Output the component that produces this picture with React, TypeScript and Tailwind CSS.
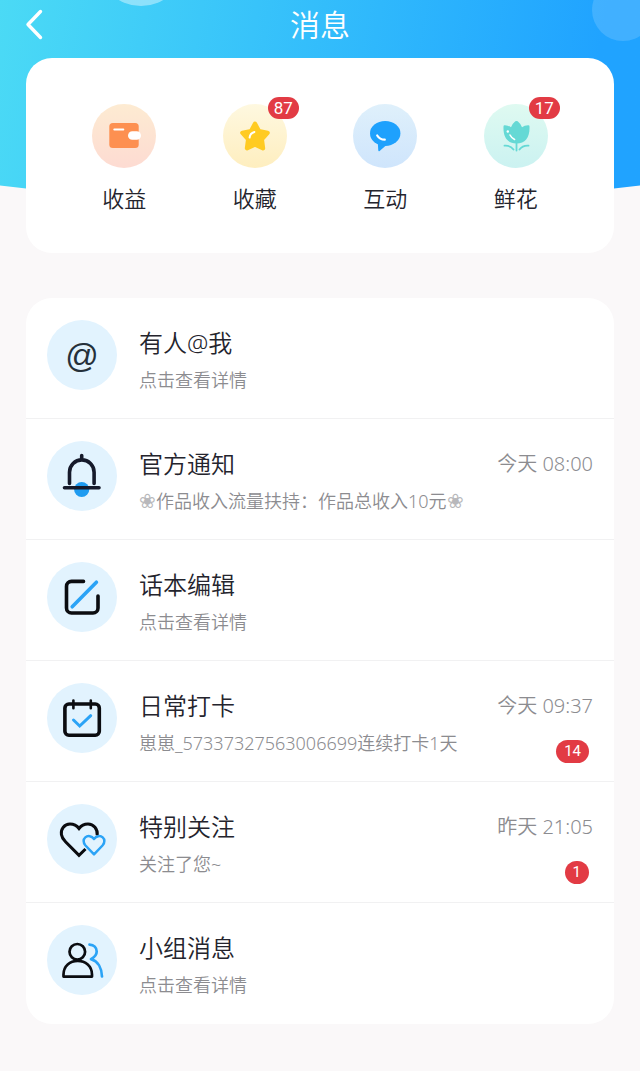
import type { ReactNode } from 'react'

type QuickItem = {
  label: string
  badge?: number
  tint: string
  icon: ReactNode
}

type MessageItem = {
  title: string
  summary: ReactNode
  time?: string
  unread?: number
  icon: ReactNode
}

const WalletIcon = () => (
  <svg viewBox="0 0 64 64" className="size-16" aria-hidden="true">
    <rect x="17.3" y="19" width="29.4" height="25" rx="3.5" fill="#fd9051" />
    <rect x="36" y="27.2" width="13" height="8.6" rx="4.3" fill="#fff" />
    <path d="M22.3 25.4h9" stroke="#fff" strokeWidth="2" strokeLinecap="round" />
  </svg>
)

const StarIcon = () => (
  <svg viewBox="0 0 64 64" className="size-16" aria-hidden="true">
    <path
      d="M32 19.8l4 7.4 8.6 1.6-5.8 6.4 1.2 9-8-3.6-8 3.6 1.2-9-5.8-6.4 8.6-1.6z"
      fill="#ffcb22"
      stroke="#ffcb22"
      strokeWidth="4.4"
      strokeLinejoin="round"
    />
    <path d="M26.6 33.6q.4-4.4 4.8-5.6" fill="none" stroke="#fff" strokeWidth="2" strokeLinecap="round" />
  </svg>
)

const ChatIcon = () => (
  <svg viewBox="0 0 64 64" className="size-16" aria-hidden="true">
    <ellipse cx="32.2" cy="29.4" rx="15.2" ry="12.5" fill="#1ea1fd" />
    <path d="M24.8 38.5l.5 8q.3 1.2 1.3.4l6.9-5.9z" fill="#1ea1fd" />
    <path d="M24.2 31.5q2.5 4.2 7.6 4.2" fill="none" stroke="#fff" strokeWidth="2.2" strokeLinecap="round" />
  </svg>
)

const TulipIcon = () => (
  <svg viewBox="0 0 64 64" className="size-16" aria-hidden="true">
    <path
      d="M19.5 22.5q0-1.5 1.5-1.2 3.5.2 6 2 1.5-3.8 4.3-6 1.2-.8 2.4 0 2.8 2.2 4.3 6 2.5-1.8 6-2 1.5-.3 1.5 1.2C46 33.5 41.5 39.5 32.5 39.5S19 33.5 19.5 22.5z"
      fill="#65d9d5"
    />
    <path
      d="M32.5 39v7.5M20.5 41.6q6-.4 9 4M44.5 41.6q-6-.4-9 4"
      fill="none"
      stroke="#65d9d5"
      strokeWidth="1.8"
      strokeLinecap="round"
    />
    <circle cx="23.8" cy="27.5" r="1.2" fill="#fff" />
    <path d="M26 31q1.5 3 4.6 4.5" fill="none" stroke="#fff" strokeWidth="1.6" strokeLinecap="round" />
  </svg>
)

const BellIcon = () => (
  <svg viewBox="0 0 70 70" className="size-full" fill="none" strokeLinecap="round" aria-hidden="true">
    <circle cx="34.7" cy="48.5" r="7.6" fill="#1f9bf0" />
    <path d="M34.7 14.5v4M22.5 42.5V31.2a12.3 12.3 0 0 1 24.6 0v11.3" stroke="#161a2b" strokeWidth="3.6" />
    <path d="M17.5 46.7h34.5" stroke="#161a2b" strokeWidth="3.6" />
  </svg>
)

const EditIcon = () => (
  <svg viewBox="0 0 70 70" className="size-full" fill="none" strokeWidth="3.6" strokeLinecap="round" aria-hidden="true">
    <path d="M36.5 19.4H24.5a5 5 0 0 0-5 5V46a5 5 0 0 0 5 5H46a5 5 0 0 0 5-5V34" stroke="#0b0c10" />
    <path d="M25.2 44.8L49.4 20.2" stroke="#2ba3f6" />
  </svg>
)

const CalendarIcon = () => (
  <svg viewBox="0 0 70 70" className="size-full" fill="none" strokeLinecap="round" aria-hidden="true">
    <rect x="17.9" y="21" width="34.4" height="31.2" rx="4" stroke="#0b0c10" strokeWidth="3.6" />
    <path d="M26.4 17.5v7.7M43.8 17.5v7.7" stroke="#0b0c10" strokeWidth="2.6" />
    <path d="M26.5 37l6.2 6 11-10.3" stroke="#2ba3f6" strokeWidth="3" />
  </svg>
)

const HeartsIcon = () => (
  <svg viewBox="0 0 70 70" className="size-full" fill="none" aria-hidden="true">
    <path
      d="M50.2 31.5C51 25 46.500 20 41 20c-4 0-7 1.8-9 4.5C30 21.8 27 20 23 20c-5.5 0-9.5 5-8.6 10.5.4 3 2 5 4.1 7.2L32 51.3l6.5-6.3"
      stroke="#0b0c10"
      strokeWidth="3"
    />
    <path
      d="M47 50.3l-8.5-8.8c-2.6-2.9-2.3-6.3-.2-8.1 2.6-2.3 6.4-1.5 8.7 1.5 2.3-3 6.1-3.8 8.7-1.5 2.1 1.8 2.4 5.2-.2 8.1z"
      stroke="#2ba3f6"
      strokeWidth="2.5"
      strokeLinejoin="round"
    />
  </svg>
)

const GroupIcon = () => (
  <svg viewBox="0 0 70 70" className="size-full" fill="none" strokeWidth="2.7" aria-hidden="true">
    <circle cx="30.3" cy="26.8" r="7.8" stroke="#0b0c10" />
    <path d="M16.5 51.6v-2C16.5 41 23 35.8 30.7 35.8S45 41 45 49.6v2z" stroke="#0b0c10" strokeLinejoin="round" />
    <path
      d="M42.5 19.6c4.5.3 7.2 3.2 7.2 6.9 0 3.5-2.2 5.7-5.7 7.6 7 1.9 10.7 8.9 11 17.4"
      stroke="#2ba3f6"
      strokeLinecap="round"
      strokeLinejoin="round"
    />
  </svg>
)

const Flower = () => <span className="font-['DejaVu_Sans',sans-serif] text-[20px] text-[#b8b8bb]">❀</span>

const quickItems: QuickItem[] = [
  { label: '收益', tint: 'from-[#fdebd2] to-[#fddbd2]', icon: <WalletIcon /> },
  { label: '收藏', badge: 87, tint: 'from-[#fef8e0] to-[#feeebf]', icon: <StarIcon /> },
  { label: '互动', tint: 'from-[#dff0fb] to-[#cfe5fc]', icon: <ChatIcon /> },
  { label: '鲜花', badge: 17, tint: 'from-[#dffaf1] to-[#cbf2f1]', icon: <TulipIcon /> },
]

const messages: MessageItem[] = [
  {
    title: '有人@我',
    summary: '点击查看详情',
    icon: <span className="font-['Liberation_Sans',sans-serif] text-[33px] leading-none text-[#25303a]">@</span>,
  },
  {
    title: '官方通知',
    summary: (
      <>
        <Flower />作品收入流量扶持：作品总收入10元<Flower />
      </>
    ),
    time: '今天 08:00',
    icon: <BellIcon />,
  },
  { title: '话本编辑', summary: '点击查看详情', icon: <EditIcon /> },
  {
    title: '日常打卡',
    summary: '崽崽_57337327563006699连续打卡1天',
    time: '今天 09:37',
    unread: 14,
    icon: <CalendarIcon />,
  },
  { title: '特别关注', summary: '关注了您~', time: '昨天 21:05', unread: 1, icon: <HeartsIcon /> },
  { title: '小组消息', summary: '点击查看详情', icon: <GroupIcon /> },
]

export default function App() {
  return (
    <div className="min-h-screen bg-[#faf8f9] pb-12 font-['Noto_Sans','Noto_Sans_CJK_SC',sans-serif] font-[350] text-[#24242d]">
      {/* Header */}
      <header className="relative h-[204px] overflow-hidden bg-linear-100 from-[#4bdaf5] to-[#20a3ff] to-90% [clip-path:ellipse(120%_100%_at_50%_0)]">
        <span className="absolute -top-[82px] left-[97px] size-[88px] rounded-full bg-white/40" />
        <span className="absolute -top-[21px] -right-[14px] size-[62px] rounded-full bg-white/15" />
        <div className="grid h-[50px] grid-cols-[1fr_auto_1fr] items-center">
          <button type="button" aria-label="返回" className="ml-6 w-5 text-white">
            <svg viewBox="0 0 20 32" className="h-8 w-5" fill="none" aria-hidden="true">
              <path d="M16.5 2.5L4 15.5 16.5 28.5" stroke="currentColor" strokeWidth="3.4" strokeLinecap="round" strokeLinejoin="round" />
            </svg>
          </button>
          <h1 className="text-[30px] leading-[50px] text-white">消息</h1>
        </div>
      </header>

      <main className="relative -mt-[146px] px-[26px]">
        {/* Shortcuts */}
        <nav className="grid grid-cols-4 rounded-[26px] bg-white px-[33px] pt-[46px] pb-[38px]">
          {quickItems.map((item) => (
            <button key={item.label} type="button" className="flex flex-col items-center gap-[14px]">
              <span className={`relative size-16 rounded-full bg-linear-to-b ${item.tint}`}>
                {item.icon}
                {item.badge && (
                  <span className="absolute -top-[7px] left-[45px] rounded-full bg-[#e23b44] px-[6px] font-['Roboto',sans-serif] text-[17px] leading-[22px] font-normal text-white">
                    {item.badge}
                  </span>
                )}
              </span>
              <span className="text-[22px] leading-[33px]">{item.label}</span>
            </button>
          ))}
        </nav>

        {/* Message list */}
        <ul className="mt-[45px] overflow-hidden rounded-[26px] bg-white">
          {messages.map((msg) => (
            <li key={msg.title} className="border-b border-[#f1f1f2] last:border-transparent">
              <a href="#" className="flex min-h-[120px] items-start px-[21px] pt-[22px] pb-3">
                <span className="flex size-[70px] shrink-0 items-center justify-center rounded-full bg-[#e2f3fe]">
                  {msg.icon}
                </span>
                <span className="ml-[22px] flex min-w-0 flex-1 flex-col gap-2 pt-[7px]">
                  <span className="text-[24px] leading-[32px]">{msg.title}</span>
                  <span className="truncate text-[18px] leading-[26px] text-[#8c8c90]">{msg.summary}</span>
                </span>
                <span className="flex shrink-0 flex-col items-end gap-[18px] pt-[7px]">
                  {msg.time && <time className="text-[20px] leading-[32px] text-[#8c8c90]">{msg.time}</time>}
                  {msg.unread && (
                    <span className="mr-1 rounded-full bg-[#e23b44] px-2 font-['Roboto',sans-serif] text-[15px] leading-[23px] font-normal text-white">
                      {msg.unread}
                    </span>
                  )}
                </span>
              </a>
            </li>
          ))}
        </ul>
      </main>
    </div>
  )
}
